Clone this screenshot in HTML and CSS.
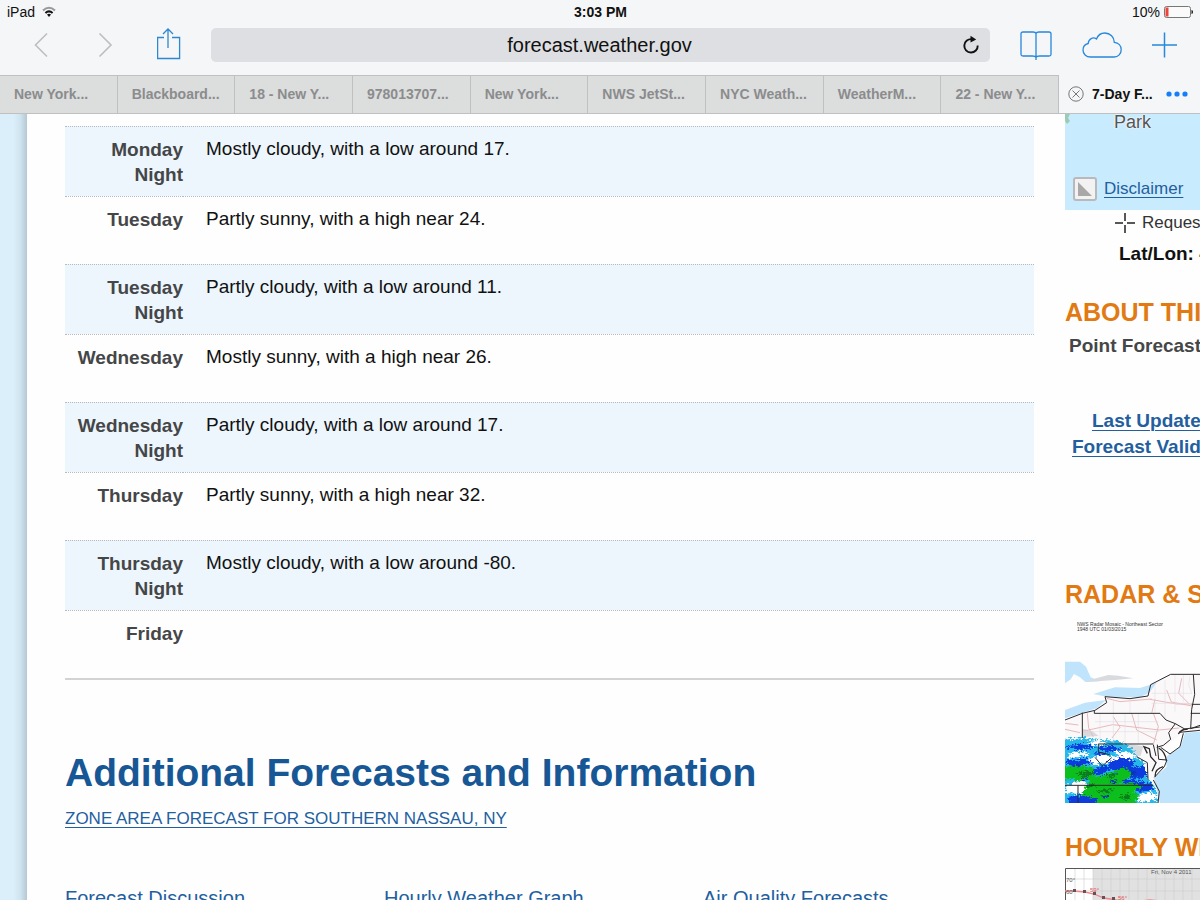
FILE: index.html
```html
<!DOCTYPE html>
<html lang="en">
<head>
<meta charset="utf-8">
<title>7-Day Forecast</title>
<link rel="stylesheet" href="styles.css">
</head>
<body>
<header class="chrome">
  <div class="status">
    <div class="status-left">
      <span>iPad</span>
      <svg width="14" height="12" viewBox="0 0 14 12" fill="none" stroke="#111" stroke-width="2"><path d="M1 4.500Q7-1 13 4.500" stroke="#999"/><path d="M3.400 7Q7 3.800 10.600 7"/><path d="M5 8.600Q7 7 9 8.600L7 11z" fill="#111" stroke="none"/></svg>
    </div>
    <strong class="clock">3:03 PM</strong>
    <div class="status-right">
      <span>10%</span>
      <svg width="30" height="12" viewBox="0 0 30 12"><rect x=".5" y=".5" width="26" height="11" rx="2" fill="#fafafa" stroke="#777"/><path d="M1.500 1.500h3v9h-3z" fill="#f0413c"/><path d="M27.500 4q1.500 0 1.500 2t-1.500 2z" fill="#111"/></svg>
    </div>
  </div>
  <div class="toolbar">
    <button class="icon-btn" aria-label="Back"><svg width="24" height="26" viewBox="0 0 24 26" fill="none" stroke="#bcbec0" stroke-width="1.600"><path d="M18 1.500L6.500 13 18 24.500"/></svg></button>
    <button class="icon-btn" aria-label="Forward"><svg width="24" height="26" viewBox="0 0 24 26" fill="none" stroke="#bcbec0" stroke-width="1.600"><path d="M6.500 1.500L18 13 6.500 24.500"/></svg></button>
    <button class="icon-btn" aria-label="Share"><svg width="24" height="34" viewBox="0 0 24 34" fill="none" stroke="#2f87cf" stroke-width="1.300"><path d="M7 9.500H0.600v21h22v-21H15M11 20V1.500M6 6l5-5 5 5"/></svg></button>
    <div class="address">
      <input class="address-input" type="text" aria-label="Address" value="forecast.weather.gov">
      <button class="icon-btn reload" aria-label="Reload"><svg width="18" height="20" viewBox="0 0 18 20"><path d="M10 4.200A6.700 6.700 0 1 0 15.700 10.500" fill="none" stroke="#111" stroke-width="1.900"/><path d="M8.500.8l5.700 3.600-5.700 3.200z" fill="#111"/></svg></button>
    </div>
    <button class="icon-btn" aria-label="Bookmarks"><svg width="32" height="30" viewBox="0 0 32 30" fill="none" stroke="#2788dd" stroke-width="1.300"><path d="M16 27.500V3.500Q15.500 2 13 2H3Q1 2 1 4v20.500q0 1.500 2 1.500h9.500q3 0 3.500 1.500.5-1.500 3.500-1.500H29q2 0 2-1.500V4q0-2-2-2H19q-2.500 0-3 1.500M16 27v3"/></svg></button>
    <button class="icon-btn" aria-label="iCloud tabs"><svg width="40" height="28" viewBox="0 0 40 28" fill="none" stroke="#2788dd" stroke-width="1.300"><path d="M8.500 26C4 26 1 22.800 1 19c0-3.200 2.200-5.700 5.200-6.500C6.500 8 11 5.500 14.500 8 16 4 19.300 2 22.800 2c5.400 0 9.500 4.200 9.500 9.300 4.200.5 6.900 3.600 6.900 7.400 0 4-3 7.300-7 7.300z"/></svg></button>
    <button class="icon-btn" aria-label="New tab"><svg width="26" height="26" viewBox="0 0 26 26" stroke="#2788dd" stroke-width="1.500"><path d="M12.500 .5v25M0 13h25"/></svg></button>
  </div>
  <nav class="tabs" aria-label="Tabs">
    <a class="tab" href="#">New York...</a>
    <a class="tab" href="#">Blackboard...</a>
    <a class="tab" href="#">18 - New Y...</a>
    <a class="tab" href="#">978013707...</a>
    <a class="tab" href="#">New York...</a>
    <a class="tab" href="#">NWS JetSt...</a>
    <a class="tab" href="#">NYC Weath...</a>
    <a class="tab" href="#">WeatherM...</a>
    <a class="tab" href="#">22 - New Y...</a>
    <div class="tab-active">
      <button class="icon-btn" aria-label="Close tab"><svg width="16" height="16" viewBox="0 0 16 16" fill="none" stroke="#777"><circle cx="8" cy="8" r="7.200"/><path d="M4.500 4.500l7 7M11.500 4.500l-7 7"/></svg></button>
      <a class="tab-title" href="#">7-Day F...</a>
      <button class="icon-btn" aria-label="More tabs"><svg width="22" height="6" viewBox="0 0 22 6" fill="#157efb"><circle cx="3" cy="3" r="2.600"/><circle cx="11" cy="3" r="2.600"/><circle cx="19" cy="3" r="2.600"/></svg></button>
    </div>
  </nav>
</header>
<div class="page">
  <div class="edge"></div>
  <main class="main">
    <table class="forecast">
      <tbody>
        <tr class="night"><th scope="row">Monday Night</th><td>Mostly cloudy, with a low around 17.</td></tr>
        <tr><th scope="row">Tuesday</th><td>Partly sunny, with a high near 24.</td></tr>
        <tr class="night"><th scope="row">Tuesday Night</th><td>Partly cloudy, with a low around 11.</td></tr>
        <tr><th scope="row">Wednesday</th><td>Mostly sunny, with a high near 26.</td></tr>
        <tr class="night"><th scope="row">Wednesday Night</th><td>Partly cloudy, with a low around 17.</td></tr>
        <tr><th scope="row">Thursday</th><td>Partly sunny, with a high near 32.</td></tr>
        <tr class="night"><th scope="row">Thursday Night</th><td>Mostly cloudy, with a low around -80.</td></tr>
        <tr><th scope="row">Friday</th><td></td></tr>
      </tbody>
    </table>
    <h1 class="title">Additional Forecasts and Information</h1>
    <div class="zone"><a class="link" href="#">ZONE AREA FORECAST FOR SOUTHERN NASSAU, NY</a></div>
    <div class="links">
      <a class="link" href="#">Forecast Discussion</a>
      <a class="link" href="#">Hourly Weather Graph</a>
      <a class="link" href="#">Air Quality Forecasts</a>
    </div>
  </main>
  <aside class="side">
    <div class="map">
      <svg class="land" width="6" height="10" viewBox="0 0 6 10"><path d="M0 0h5L3 4l2 3-3 3-2-3z" fill="#9dccb4"/></svg>
      <span class="place">Park</span>
      <div class="map-foot">
        <svg width="24" height="24" viewBox="0 0 24 24"><rect x="1" y="1" width="22" height="22" rx="2" fill="#f3f2f3" stroke="#b9b9bd" stroke-width="2"/><path d="M5 5v14h14z" fill="#aaa7a8"/></svg>
        <a class="link" href="#">Disclaimer</a>
      </div>
    </div>
    <div class="request">
      <svg width="20" height="20" viewBox="0 0 20 20" stroke="#222" stroke-width="1.500"><path d="M10 0v8M10 12v8M0 10h8M12 10h8"/></svg>
      <span>Requested Location</span>
    </div>
    <div class="latlon">Lat/Lon: 40.66°N 73.55°W</div>
    <h2 class="side-title about">ABOUT THIS FORECAST</h2>
    <div class="point">Point Forecast:</div>
    <div class="updates">
      <a class="link" href="#">Last Update:</a>
      <a class="link valid" href="#">Forecast Valid:</a>
    </div>
    <h2 class="side-title radar-title">RADAR &amp; SATELLITE</h2>
    <svg class="radar" width="135" height="190" viewBox="0 0 135 190" role="img" aria-label="Northeast radar mosaic">
      <defs>
        <filter id="rough" x="-5%" y="-5%" width="110%" height="110%"><feTurbulence type="fractalNoise" baseFrequency=".12 .2" numOctaves="3" seed="4"/><feDisplacementMap in="SourceGraphic" scale="24" xChannelSelector="R" yChannelSelector="G"/></filter>
        <clipPath id="frame"><path d="M45 0h405v460H45z"/></clipPath>
      </defs>
      <text x="12" y="13" class="radar-text">NWS Radar Mosaic - Northeast Sector</text>
      <text x="12" y="18" class="radar-text">1948 UTC 01/03/2015</text>
      <g transform="translate(-15 37) scale(.33333)">
        <g clip-path="url(#frame)" fill="none" stroke-width="3">
          <path fill="#fbf8f9" d="M45 210L135 180 165 155 180 138 290 140 300 105 360 73H450V245L400 250 330 300V460H45z"/>
          <path fill="#bfe4fb" d="M45 35H90L108 50 122 82 150 94 106 96 90 82 72 72 62 88 45 100zM130 132L195 112 270 114 320 98 298 128 270 142 170 140zM45 180L105 158 168 150 140 175 45 205zM450 245L405 248 392 290 348 320 350 350 312 384 330 460H450z"/>
          <path fill="#d8dade" stroke="none" d="M130 87l45-12 30 2 45 8-55 5-90 6zM98 236l30 8 18 14-48 3zM195 308l45-25 40 6-8 28-35 3z"/>
          <g filter="url(#rough)" stroke="none">
            <path fill="#27b8e9" d="M30 270L105 264 150 270 205 272 240 292 258 318 280 338 292 385 316 410 326 480H30z"/>
            <path fill="#fff" d="M60 310l40-6 18 12-65 10zM112 330l40-20 28 8 36 4-22 24-40-6-20 8zM190 300l50 8 25 16-42 8zM50 405l45-14 20 12-15 30-52-4zM268 435l35-10 22 14-18 14-45 4zM110 276l40-3 32 9-50 6z"/>
            <path fill="#0b3bdd" d="M35 290l68-8 34 10-45 8zM140 290l40-4 35 14-50 6zM40 332l66-6 22 14-62 12zM170 338l45-16 40 12-15 30-52-3zM110 368l50-22 28 8-38 22zM215 355l64-8 16 30-46 12zM220 385l60 10-10 30-52-10zM55 440l80-10 18 40H55zM130 310l20-5 20 5-18 8zM155 385l40-10 20 15-44 14zM255 405l44-8 12 22-40 6z"/>
            <path fill="#10bf1b" d="M30 350l70-2 35 8-25 26-80 8zM125 385l60-18 45-14 20 20-38 26-10 30-62 18-44-10 8-24zM195 405l60-6 20 12-35 22-56 12zM45 372l75-6 30 22-72 5zM150 430l65-12 55 16-30 46H130z"/>
            <path fill="#087c1c" d="M78 368l40-5 14 10-34 8zM168 375l38-6-24 16zM135 425l60-13-20 16zM210 438l28-7 4 13-20 6zM100 400l38 4-16 10z"/>
            <path fill="#0635b6" d="M175 393l28-3-12 9zM235 365l30 3-14 6zM75 345l20-2-8 8zM150 440l30-6-8 14zM90 385l24-4-6 12z"/>
          </g>
          <path stroke="#e6b9bd" d="M112 190l4 44 14 26M170 145l40 10 95-8M300 148l80 14 45 0M305 190l10-42M350 120l14 36 62 12M45 238l45 10M98 244l90-20 140 16 60-6M190 200l20 32-24 32M245 190l15 50 60 30M310 190l15 40-14 50M45 220l40 5M395 85l-9 45 30 30"/>
          <path stroke="#dcd9e0" stroke-width="1.500" d="M315 110v80M345 90v120M375 75v110M400 75v80M150 190v90M190 190v90M225 190v90M265 190v90M135 215h190M98 245h230M305 130h120M305 160h120M190 155v35M240 150v40M420 80l-4 24 10 28"/>
          <path stroke="#2c292c" d="M45 210L97 190 135 181 170 158 165 140 240 146 294 138 302 104 362 73H450M97 188V264M133 182v8H330l18 20 28 11-20 27 6 20-22 18-20 6M145 282H310M145 282v24l34 8M430 73l4 60-9 45-3 58 28-10M425 163h25M422 190h28M376 221l28 16 46-6M404 237l-16 10 62-6M400 250l-10 40-30 22-28-20M310 284l8 34M322 284l4 44 25 2-8 20-30 32M260 320l32 18 2 50M135 322l22 26 28-25M45 406H310M84 406v54M310 390l18 34-4 36"/>
          <path stroke="#2c292c" stroke-width="4" d="M385 252q10-16 28-14M316 380q-3-22 24-30M326 294q20 12 23 38M292 310l-10-20 16 6 4 24 16 18-12 26"/>
        </g>
      </g>
    </svg>
    <h2 class="side-title hourly">HOURLY WEATHER</h2>
    <svg class="chart" width="135" height="80" viewBox="0 0 135 80" role="img" aria-label="Hourly weather graph">
      <path fill="#fff" d="M0 0h135v80H0z"/><path fill="#e1e1e2" d="M28 0h107v80H28z"/>
      <path stroke="#ccc" stroke-width=".6" d="M10 0v80M19 0v80M28 0v80M37 0v80M46 0v80M55 0v80M64 0v80M73 0v80M82 0v80M91 0v80M100 0v80M109 0v80M118 0v80M127 0v80M0 11h135M0 23h135"/>
      <path d="M.5 80V.5H135" fill="none" stroke="#555"/>
      <path d="M0 23h8l12 1 9 2 10 4 12 2 14 2 20-2 22 2" fill="none" stroke="#ee858a" stroke-width="1.300"/>
      <path d="M8 21h3v3H8zM18 22h3v3h-3zM28 24h3v3h-3zM37 28h3v3h-3zM47 29h3v3h-3z" fill="#695055"/>
      <text class="chart-text" x="86" y="6">Fri, Nov 4 2011</text><text class="chart-text" x="1" y="14">70°</text><text class="chart-text" x="1" y="26">60°</text><text class="chart-text warm" x="25" y="24">59°</text><text class="chart-text warm" x="53" y="32">56°</text>
    </svg>
  </aside>
</div>
</body>
</html>
```

FILE: styles.css
```css
* { box-sizing: border-box; }
body {
  margin: 0;
  height: 100vh;
  display: flex;
  flex-direction: column;
  overflow: hidden;
  background: #fefefe;
  color: #111;
  font-family: "Liberation Sans", Arial, sans-serif;
  font-size: 19px;
  line-height: 26px;
}
h1, h2 { margin: 0; }
svg { display: block; flex: none; }
.chrome { flex: none; background: #f4f6f7; }
.status {
  display: grid;
  grid-template-columns: 1fr auto 1fr;
  align-items: center;
  height: 24px;
  padding: 0 6px 0 7px;
  font-size: 14px;
  line-height: 24px;
}
.status-left, .status-right { display: flex; align-items: center; gap: 7px; }
.status-right { justify-content: flex-end; gap: 4px; }
.toolbar {
  display: flex;
  align-items: center;
  height: 51px;
  padding: 0 22px 9px 29px;
}
.toolbar > .icon-btn + .icon-btn { margin-left: 40px; }
.toolbar > .address ~ .icon-btn { margin-left: 30px; }
.icon-btn { display: block; flex: none; padding: 0; border: 0; background: none; }
.address {
  flex: 1;
  display: flex;
  align-items: center;
  height: 34px;
  margin-left: 30px;
  border-radius: 5px;
  background: #dddfe2;
}
.address-input {
  flex: 1;
  min-width: 0;
  padding: 0 0 0 34px;
  border: 0;
  background: none;
  color: #111;
  font: inherit;
  font-size: 20px;
  text-align: center;
}
.reload { width: 36px; padding-left: 8px; }
.tabs {
  display: flex;
  height: 39px;
  font-size: 14px;
  font-weight: bold;
  line-height: 37px;
}
.tab {
  flex: 1;
  min-width: 0;
  padding-left: 14px;
  border: 1px solid #bfc0c0;
  border-left: 0;
  background: #dcdddd;
  color: #8b8c8d;
  text-decoration: none;
  white-space: nowrap;
  overflow: hidden;
}
.tab-active {
  flex: none;
  display: flex;
  align-items: center;
  gap: 8px;
  width: 141px;
  padding: 0 12px 0 9px;
  border-bottom: 1px solid #bfc0c0;
}
.tab-title { flex: 1; color: #111; text-decoration: none; }
.page { flex: 1; min-height: 0; display: flex; overflow: hidden; }
.edge {
  flex: none;
  width: 27px;
  background: linear-gradient(to right, #daeff9 50%, #cfe4ee 75%, #b3c8d2);
}
.main { flex: 1; min-width: 0; margin: 12px 31px 0 38px; }
.link {
  color: #235f9f;
  text-decoration: underline;
  text-decoration-thickness: 1px;
  text-underline-offset: 3px;
}
.forecast {
  width: 100%;
  border-collapse: separate;
  border-spacing: 0;
  border-bottom: 2px solid #d3d3d3;
  line-height: 25px;
}
.forecast tr { height: 68px; }
.forecast .night { height: 70px; background: #edf6fd; }
.forecast th, .forecast td {
  padding: 9px 0 0;
  border-top: 1px dotted #b3bcc0;
  vertical-align: top;
  text-align: left;
}
.forecast th { width: 118px; padding: 10px 0 0 8px; color: #454648; text-align: right; }
.forecast td { padding-left: 23px; }
.title { margin-top: 70px; color: #185795; font-size: 39px; line-height: 46px; }
.zone { margin-top: 11px; font-size: 17px; line-height: 24px; }
.links {
  display: grid;
  grid-template-columns: repeat(3, 1fr);
  margin-top: 55px;
  padding-right: 12px;
  font-size: 20px;
  line-height: 24px;
}
.side { flex: none; width: 135px; overflow: hidden; white-space: nowrap; }
.map { position: relative; height: 96px; padding: 0 0 0 8px; background: #c9ebfe; }
.land { position: absolute; top: 0; left: 0; }
.place {
  display: block;
  padding-left: 41px;
  color: #555;
  font-size: 18px;
  line-height: 17px;
  text-shadow: 0 0 2px #fff, 0 0 2px #fff;
}
.map-foot { display: flex; align-items: center; gap: 7px; margin-top: 45px; font-size: 17px; }
.request {
  display: flex;
  align-items: center;
  gap: 7px;
  padding-left: 50px;
  color: #333;
  font-size: 17px;
}
.latlon { margin-top: 5px; padding-left: 54px; font-weight: bold; }
.side-title { color: #e27a13; font-size: 25px; line-height: 30px; }
.about { margin-top: 30px; }
.point { margin-top: 6px; padding-left: 4px; color: #454648; font-weight: bold; }
.updates { display: grid; margin-top: 49px; padding-left: 27px; font-weight: bold; }
.valid { margin-left: -20px; }
.radar-title { margin-top: 119px; }
.radar { margin-top: 4px; }
.radar-text { font-size: 5px; fill: #333; }
.hourly { margin-top: 29px; }
.chart { margin-top: 6px; }
.chart-text { font-size: 6px; fill: #555; }
.warm { fill: #e0555a; }
```
